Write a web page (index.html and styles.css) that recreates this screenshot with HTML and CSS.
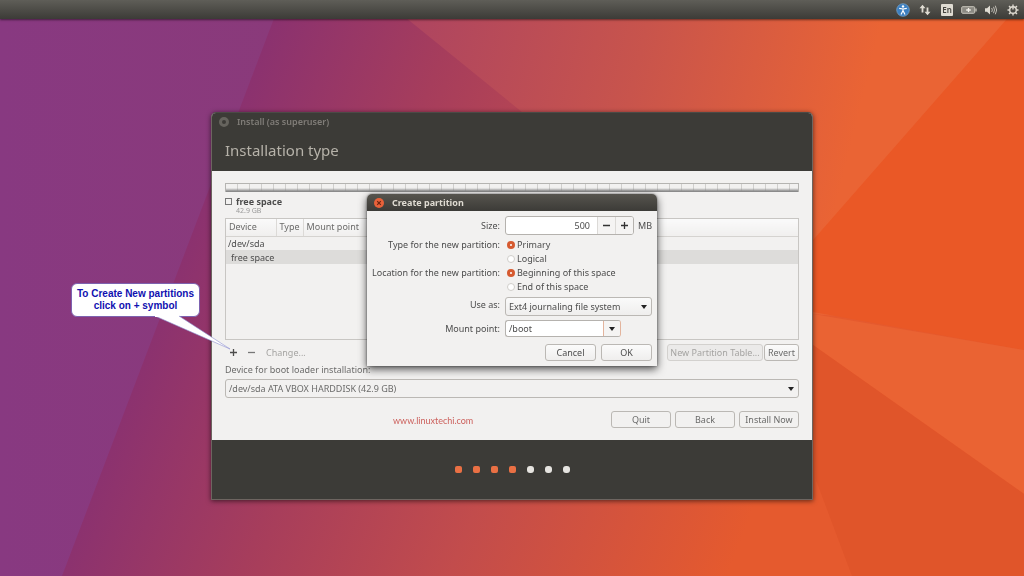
FILE: index.html
```
<!DOCTYPE html>
<html lang="en">
<head>
<meta charset="utf-8">
<title>Install</title>
<link rel="stylesheet" href="styles.css">
</head>
<body>
<svg class="wallpaper" viewBox="0 0 1024 576" preserveAspectRatio="none" aria-hidden="true">
  <defs>
    <linearGradient id="base" gradientUnits="userSpaceOnUse" x1="175" y1="206" x2="780" y2="440">
      <stop offset="0" stop-color="#873072"/>
      <stop offset="0.3" stop-color="#a63d5c"/>
      <stop offset="0.6" stop-color="#c24c4c"/>
      <stop offset="1" stop-color="#e55a2e"/>
    </linearGradient>
    <linearGradient id="rays" gradientUnits="userSpaceOnUse" x1="420" y1="0" x2="860" y2="110">
      <stop offset="0" stop-color="#ae4560"/>
      <stop offset="0.5" stop-color="#c8544c"/>
      <stop offset="1" stop-color="#ea6434"/>
    </linearGradient>
    <linearGradient id="plum" x1="0" y1="0" x2="1" y2="0">
      <stop offset="0" stop-color="#883981"/>
      <stop offset="1" stop-color="#8a3a7a"/>
    </linearGradient>
  </defs>
  <rect width="1024" height="576" fill="url(#base)"/>
  <path d="M0 0H281L62 576H0Z" fill="url(#plum)"/>
  <path d="M384 0H1024V330L813 314L522 112Z" fill="url(#rays)"/>
  <path d="M1024 0L1006 20L750 312H813L1024 350V0Z" fill="#ea5826"/>
  <path d="M700 295L813 314L1024 350V494L813 345Z" fill="#ea6333"/>
  <path d="M813 345L1024 494V576H852L816 480Z" fill="#e0552a"/>
</svg>
<header class="panel">
  <svg width="14" height="14" viewBox="0 0 14 14" role="img" aria-label="Accessibility"><circle cx="7" cy="7" r="6.3" fill="#3c7fc0" stroke="#79a9d3" stroke-width=".7"/><circle cx="7" cy="3.4" r="1.2" fill="#fff"/><path d="M3.2 5.4L7 6L10.800 5.400M7 6V8M5 11.500L7 7.500L9 11.500" stroke="#fff" stroke-width="1.2" fill="none"/></svg>
  <svg width="12" height="12" viewBox="0 0 12 12" role="img" aria-label="Network"><path d="M3.500 8.500V3M8.500 3.500V9" stroke="#dfdbd2" stroke-width="1.800"/><path d="M.5 4.300L3.500 .8L6.500 4.300ZM5.500 7.700L8.500 11.200L11.500 7.700Z" fill="#dfdbd2"/></svg>
  <span class="lang">En</span>
  <svg width="16" height="10" viewBox="0 0 16 10" role="img" aria-label="Battery"><rect x=".7" y="1.700" width="13" height="6.600" rx="1" fill="#8b8982" stroke="#c9c5bc"/><path d="M15 3.500V6.500" stroke="#c9c5bc" stroke-width="1.300"/><path d="M7.500 3V7M5.200 5H9.800" stroke="#f1eee7" stroke-width="1.300"/></svg>
  <svg width="14" height="12" viewBox="0 0 14 12" role="img" aria-label="Volume"><path d="M1 4.300H3L6 1.500V10.500L3 7.700H1Z" fill="#dfdbd2"/><path d="M7.700 4Q9 6 7.700 8M9.500 2.800Q11.500 6 9.500 9.200M11.300 1.700Q14 6 11.300 10.300" stroke="#bfbbb3" fill="none"/></svg>
  <svg width="12" height="12" viewBox="0 0 12 12" role="img" aria-label="System"><circle cx="6" cy="6" r="3.300" fill="none" stroke="#dfdbd2" stroke-width="1.400"/><path d="M6 .5V5.500M6 9.500V11.500M.5 6H2.500M9.500 6H11.500M2 2L3.500 3.500M10 2L8.500 3.500M2 10L3.500 8.500M10 10L8.500 8.500" stroke="#dfdbd2" stroke-width="1.400"/></svg>
</header>
<main class="desktop">
  <section class="installer">
    <header class="installer-head">
      <div class="titlebar"><button class="close idle" type="button" aria-label="Close"></button><span>Install (as superuser)</span></div>
      <h1>Installation type</h1>
    </header>
    <div class="content">
      <div class="disk-bar"></div>
      <div class="legend"><i class="swatch"></i><div><b>free space</b><small>42.9 GB</small></div></div>
      <div class="tree">
        <table>
          <thead><tr><th class="col-device">Device</th><th class="col-type">Type</th><th>Mount point</th></tr></thead>
          <tbody>
            <tr><td colspan="3">/dev/sda</td></tr>
            <tr class="selected"><td colspan="3">free space</td></tr>
          </tbody>
        </table>
      </div>
      <div class="toolbar">
        <button class="flat" type="button" aria-label="Add"><svg width="7" height="7" viewBox="0 0 7 7"><path d="M3.500 0V7M0 3.500H7" stroke="#4c4c4c" stroke-width="1.300"/></svg></button>
        <button class="flat" type="button" aria-label="Remove"><svg width="7" height="7" viewBox="0 0 7 7"><path d="M0 3.500H7" stroke="#777" stroke-width="1.300"/></svg></button>
        <button class="flat change" type="button" disabled>Change...</button>
        <button class="btn new-table" type="button" disabled>New Partition Table...</button>
        <button class="btn revert" type="button">Revert</button>
      </div>
      <label class="boot-label" for="boot">Device for boot loader installation:</label>
      <div class="select wide"><select id="boot"><option>/dev/sda ATA VBOX HARDDISK (42.9 GB)</option></select></div>
      <div class="actions">
        <a class="site" href="#">www.linuxtechi.com</a>
        <button class="btn nav" type="button">Quit</button>
        <button class="btn nav" type="button">Back</button>
        <button class="btn nav" type="button">Install Now</button>
      </div>
    </div>
    <footer class="progress"><i class="on"></i><i class="on"></i><i class="on"></i><i class="on"></i><i></i><i></i><i></i></footer>

    <form class="dialog">
      <div class="dialog-title"><button class="close" type="button" aria-label="Close"><svg width="10" height="10" viewBox="0 0 10 10"><path d="M3.200 3.200L6.800 6.800M6.800 3.200L3.200 6.800" stroke="#6b2512" stroke-width="1.200"/></svg></button><span>Create partition</span></div>
      <div class="fields">
        <label class="name" for="size">Size:</label>
        <div class="size-row"><div class="spin"><input id="size" type="text" value="500"><button type="button" aria-label="Decrease"><svg width="7" height="7" viewBox="0 0 7 7"><path d="M0 3.500H7" stroke="#333" stroke-width="1.300"/></svg></button><button type="button" aria-label="Increase"><svg width="7" height="7" viewBox="0 0 7 7"><path d="M3.500 0V7M0 3.500H7" stroke="#333" stroke-width="1.300"/></svg></button></div><span>MB</span></div>
        <span class="name group-name first">Type for the new partition:</span>
        <div class="radios first"><label><input type="radio" name="type" checked>Primary</label><label><input type="radio" name="type">Logical</label></div>
        <span class="name group-name">Location for the new partition:</span>
        <div class="radios"><label><input type="radio" name="place" checked>Beginning of this space</label><label><input type="radio" name="place">End of this space</label></div>
        <label class="name" for="use">Use as:</label>
        <div class="select use"><select id="use"><option>Ext4 journaling file system</option></select></div>
        <label class="name" for="mount">Mount point:</label>
        <div class="combo"><input id="mount" type="text" value="/boot"><button type="button" aria-label="Show mount points"><i class="arrow"></i></button></div>
      </div>
      <div class="dialog-actions"><button class="btn" type="button">Cancel</button><button class="btn" type="button">OK</button></div>
    </form>

    <aside class="callout">
      <p>To Create New partitions<br>click on + symbol</p>
      <svg class="tail" width="80" height="36" viewBox="0 0 80 36" aria-hidden="true"><path d="M3 1L78 34L27 1" fill="#fff" stroke="#8d8fd0" stroke-width=".6"/><path d="M3 0H27V2H3Z" fill="#fff"/></svg>
    </aside>
  </section>
</main>
</body>
</html>
```
FILE: styles.css
```
* { box-sizing: border-box; }
body {
  margin: 0;
  min-height: 100vh;
  overflow: hidden;
  background: #a43c60;
  color: #4c4c4c;
  font: 9px/14px "Noto Sans", "Open Sans", sans-serif;
}
button, input, select { font: inherit; color: inherit; margin: 0; padding: 0; outline: 0; }
svg { display: block; flex: none; }
i { display: block; flex: none; }

.wallpaper { position: fixed; inset: 0; width: 100%; height: 100%; z-index: -1; }

.panel {
  display: grid;
  grid-auto-flow: column;
  grid-auto-columns: 22px;
  align-items: center;
  justify-items: center;
  justify-content: end;
  height: 19px;
  background: linear-gradient(#5f5e58, #3c3b37);
  box-shadow: 0 1px 2px rgba(0, 0, 0, .5);
}
.lang {
  width: 12px;
  height: 12px;
  border-radius: 1px;
  background: #dfdbd2;
  color: #45443f;
  font-size: 8px;
  font-weight: 600;
  line-height: 12px;
  text-align: center;
}

.desktop { display: flex; justify-content: center; padding: 93px 0 16px; }
.installer {
  position: relative;
  width: calc(100% - 422px);
  min-width: 560px;
  max-width: 900px;
  border: 1px solid #6d6560;
  border-top-color: #4b4a46;
  border-radius: 5px 5px 0 0;
  background: #f2f1f0;
  box-shadow: 0 1px 5px rgba(0, 0, 0, .6);
}
.installer-head { height: 58px; background: #3c3b37; border-radius: 4px 4px 0 0; color: #b6b2a9; }
.titlebar { display: flex; align-items: center; gap: 8px; height: 18px; padding-left: 7px; color: #807d78; font-weight: 600; }
.close {
  display: flex;
  width: 10px;
  height: 10px;
  border: 0;
  border-radius: 50%;
  background: #e8613a;
}
.close.idle { background: #3c3b37; border: 3px solid #66645e; }
h1 { margin: 0; padding: 9px 13px 0; font-size: 15px; font-weight: 400; line-height: 20px; }

.content { display: flex; flex-direction: column; padding: 12px 13px; color: #6b6b6a; }
.disk-bar {
  height: 9px;
  border: 1px solid #b5b4b1;
  border-bottom: 0;
  background:
    linear-gradient(transparent 50%, #8b8b8b 90%),
    repeating-linear-gradient(90deg, #f2f1f0 0 11px, #d0cfcd 11px 12px);
}
.legend { display: flex; gap: 4px; padding-top: 3px; height: 26px; }
.swatch { width: 7px; height: 7px; margin-top: 3px; border: 1px solid #777; }
.legend b { display: block; color: #4c4c4c; line-height: 13px; }
.legend small { display: block; font-size: 7px; line-height: 6px; color: #999; }
.tree { height: 122px; border: 1px solid #c8c6c3; }
table { width: 100%; border-collapse: collapse; }
th {
  height: 17px;
  padding: 0 3px;
  border-right: 1px solid #dcdad7;
  border-bottom: 1px solid #d5d3d0;
  background: linear-gradient(#fafafa, #f0efee);
  font-weight: 400;
  text-align: left;
}
th:last-child { border-right: 0; }
.col-device { width: 50px; }
.col-type { width: 27px; }
td { height: 14px; padding: 0 2px; line-height: 13px; color: #4c4c4c; }
.selected { background: #dddcda; }
.selected td { padding-left: 5px; }

.toolbar { display: flex; align-items: center; gap: 1px; height: 17px; margin-top: 4px; }
.flat { display: flex; border: 0; padding: 5px; background: none; }
.change { padding: 0 5px; color: #a5a4a2; }
.btn {
  height: 17px;
  border: 1px solid #bbb8b4;
  border-radius: 3px;
  background: linear-gradient(#fbfbfb, #efeeed);
  line-height: 14px;
}
.new-table { width: 96px; margin-left: auto; color: #a5a4a2; background: #ebeae9; border-color: #d3d1ce; }
.revert { width: 35px; }
.boot-label { margin-top: 2px; }
.select { position: relative; }
.select::after, .arrow {
  content: "";
  border: 3px solid transparent;
  border-top: 4px solid #222;
  border-bottom: 0;
}
.select::after { position: absolute; right: 5px; top: 8px; pointer-events: none; }
select {
  appearance: none;
  width: 100%;
  height: 19px;
  padding-left: 3px;
  border: 1px solid #bbb8b4;
  border-radius: 3px;
  background: linear-gradient(#fafafa, #efeeed);
}
.wide { margin-top: 2px; }
.wide select { background: #f2f1f0; }
.actions { display: flex; gap: 4px; margin-top: 13px; }
.site { margin: 3px auto 0 168px; color: #cc5f5b; text-decoration: none; font-family: Lato, sans-serif; }
.nav { width: 60px; background: #f2f1f0; }

.progress { display: flex; justify-content: center; align-items: center; gap: 11px; height: 59px; background: #3c3b37; }
.progress i { width: 7px; height: 7px; border-radius: 3px; background: #e6e4e0; }
.progress .on { border-radius: 2px; background: #ea7044; }

.dialog {
  position: absolute;
  top: 81px;
  left: 0;
  right: 0;
  width: 290px;
  margin: 0 auto;
  border-radius: 5px 5px 0 0;
  background: #f2f1f0;
  box-shadow: 0 3px 9px rgba(0, 0, 0, .7), 0 0 2px rgba(0, 0, 0, .5);
}
.dialog-title {
  display: flex;
  align-items: center;
  gap: 8px;
  height: 17px;
  padding-left: 7px;
  border-radius: 5px 5px 0 0;
  background: linear-gradient(#56544e, #3c3b37);
  color: #dfdbd2;
  font-weight: 700;
}
.fields { display: grid; grid-template-columns: 133px 1fr; column-gap: 5px; padding: 5px 6px 0 0; align-items: center; }
.name { text-align: right; white-space: nowrap; }
.size-row { display: flex; align-items: center; gap: 4px; height: 19px; }
.spin, .combo { display: flex; border: 1px solid #b5b2ae; border-radius: 3px; overflow: hidden; background: #fff; }
.spin { width: 129px; height: 19px; }
.spin input, .combo input { flex: 1; min-width: 0; border: 0; background: transparent; }
.spin input { padding-right: 7px; text-align: right; }
.spin button, .combo button {
  display: flex;
  align-items: center;
  justify-content: center;
  width: 18px;
  border: 0;
  border-left: 1px solid #dcdad7;
  background: #f5f4f3;
}
.group-name { align-self: start; }
.first { padding-top: 3px; }
.radios label { display: flex; align-items: center; gap: 2px; height: 14px; padding-left: 2px; }
input[type="radio"] { appearance: none; width: 8px; height: 8px; border: 1px solid #d0ceca; border-radius: 50%; background: #fff; }
input[type="radio"]:checked { border: 3px solid #d65a30; }
.use { margin-top: 3px; }
.combo { width: 116px; height: 17px; margin: 4px 0; border-right-color: #e3b49d; }
.combo input { padding-left: 3px; }
.combo button { width: 17px; border-left-color: #e3b49d; }
.dialog-actions { display: flex; justify-content: flex-end; gap: 5px; padding: 3px 5px 5px; }
.dialog-actions .btn { width: 51px; }

.callout { position: absolute; top: 170px; left: -141px; }
.callout p {
  width: 129px;
  margin: 0;
  padding: 4px 0;
  border: 1px solid #7d62b0;
  border-radius: 6px;
  background: #fff;
  color: #1010b0;
  font: 700 10px/12px "Liberation Sans", sans-serif;
  text-align: center;
  white-space: nowrap;
}
.tail { position: absolute; left: 81px; top: 32px; }
```
